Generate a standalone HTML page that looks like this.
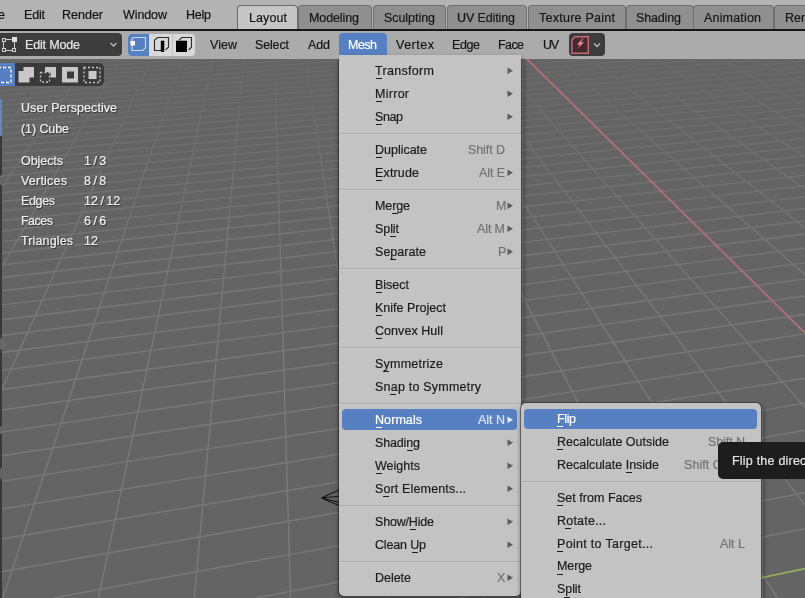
<!DOCTYPE html>
<html><head><meta charset="utf-8"><style>
html,body{margin:0;padding:0;}
body{width:805px;height:598px;overflow:hidden;position:relative;background:#646464;font-family:"Liberation Sans",sans-serif;font-size:12.5px;}
.t{position:absolute;white-space:nowrap;line-height:15px;will-change:transform;-webkit-text-stroke:0.2px currentColor;}
.r{position:absolute;}
</style></head><body>
<svg width="805" height="598" style="position:absolute;left:0;top:0">
<rect x="0" y="58" width="805" height="540" fill="#646464"/>
<defs><linearGradient id="gf" x1="0" y1="58" x2="0" y2="598" gradientUnits="userSpaceOnUse"><stop offset="0" stop-color="#fff" stop-opacity="0.25"/><stop offset="0.133" stop-color="#fff" stop-opacity="0.5"/><stop offset="0.356" stop-color="#fff" stop-opacity="0.85"/><stop offset="0.54" stop-color="#fff" stop-opacity="1"/></linearGradient><mask id="gm" maskUnits="userSpaceOnUse" x="0" y="0" width="805" height="598"><rect x="0" y="58" width="805" height="540" fill="url(#gf)"/></mask></defs>
<g id="grid" stroke="#7a7a7a" stroke-width="1.4" fill="none" mask="url(#gm)"><line x1="0.0" y1="61.2" x2="46.8" y2="58.0"/><line x1="0.0" y1="65.0" x2="101.2" y2="58.0"/><line x1="0.0" y1="69.0" x2="156.0" y2="58.0"/><line x1="0.0" y1="73.1" x2="211.2" y2="58.0"/><line x1="0.0" y1="77.3" x2="266.7" y2="58.0"/><line x1="0.0" y1="81.6" x2="322.6" y2="58.0"/><line x1="0.0" y1="86.1" x2="378.9" y2="58.0"/><line x1="0.0" y1="90.7" x2="435.6" y2="58.0"/><line x1="0.0" y1="95.4" x2="492.6" y2="58.0"/><line x1="0.0" y1="100.4" x2="550.1" y2="58.0"/><line x1="0.0" y1="105.5" x2="607.9" y2="58.0"/><line x1="0.0" y1="110.8" x2="666.2" y2="58.0"/><line x1="0.0" y1="116.3" x2="724.9" y2="58.0"/><line x1="0.0" y1="122.0" x2="783.9" y2="58.0"/><line x1="0.0" y1="127.9" x2="805.0" y2="61.2"/><line x1="0.0" y1="134.0" x2="805.0" y2="66.3"/><line x1="0.0" y1="140.3" x2="805.0" y2="71.6"/><line x1="0.0" y1="146.9" x2="805.0" y2="77.1"/><line x1="0.0" y1="153.8" x2="805.0" y2="82.8"/><line x1="0.0" y1="161.0" x2="805.0" y2="88.7"/><line x1="0.0" y1="168.5" x2="805.0" y2="94.9"/><line x1="0.0" y1="176.3" x2="805.0" y2="101.4"/><line x1="0.0" y1="184.4" x2="805.0" y2="108.2"/><line x1="0.0" y1="192.9" x2="805.0" y2="115.2"/><line x1="0.0" y1="201.8" x2="805.0" y2="122.6"/><line x1="0.0" y1="211.1" x2="805.0" y2="130.4"/><line x1="0.0" y1="220.8" x2="805.0" y2="138.5"/><line x1="0.0" y1="231.1" x2="805.0" y2="147.0"/><line x1="0.0" y1="241.9" x2="805.0" y2="155.9"/><line x1="0.0" y1="253.2" x2="805.0" y2="165.3"/><line x1="0.0" y1="265.1" x2="805.0" y2="175.3"/><line x1="0.0" y1="277.7" x2="805.0" y2="185.7"/><line x1="0.0" y1="291.0" x2="805.0" y2="196.8"/><line x1="0.0" y1="305.1" x2="805.0" y2="208.5"/><line x1="0.0" y1="320.0" x2="805.0" y2="220.9"/><line x1="0.0" y1="335.8" x2="805.0" y2="234.0"/><line x1="0.0" y1="352.7" x2="805.0" y2="248.0"/><line x1="0.0" y1="370.6" x2="805.0" y2="262.9"/><line x1="0.0" y1="389.8" x2="805.0" y2="278.9"/><line x1="0.0" y1="410.3" x2="805.0" y2="295.9"/><line x1="0.0" y1="432.4" x2="805.0" y2="314.2"/><line x1="0.0" y1="456.0" x2="805.0" y2="333.9"/><line x1="0.0" y1="481.6" x2="805.0" y2="355.2"/><line x1="0.0" y1="509.3" x2="805.0" y2="378.2"/><line x1="0.0" y1="539.3" x2="805.0" y2="403.1"/><line x1="0.0" y1="572.0" x2="805.0" y2="430.3"/><line x1="805.0" y1="460.0" x2="53.2" y2="598.0"/><line x1="805.0" y1="492.7" x2="255.8" y2="598.0"/><line x1="805.0" y1="528.7" x2="459.9" y2="598.0"/><line x1="0.0" y1="58.8" x2="0.8" y2="58.0"/><line x1="0.0" y1="91.2" x2="30.8" y2="58.0"/><line x1="0.0" y1="133.3" x2="60.9" y2="58.0"/><line x1="0.0" y1="189.9" x2="91.1" y2="58.0"/><line x1="0.0" y1="270.4" x2="121.4" y2="58.0"/><line x1="0.0" y1="393.7" x2="151.8" y2="58.0"/><line x1="182.3" y1="58.0" x2="2.8" y2="598.0"/><line x1="213.0" y1="58.0" x2="98.4" y2="598.0"/><line x1="243.7" y1="58.0" x2="194.3" y2="598.0"/><line x1="274.6" y1="58.0" x2="290.6" y2="598.0"/><line x1="305.6" y1="58.0" x2="387.2" y2="598.0"/><line x1="336.7" y1="58.0" x2="484.2" y2="598.0"/><line x1="368.0" y1="58.0" x2="581.6" y2="598.0"/><line x1="399.3" y1="58.0" x2="679.3" y2="598.0"/><line x1="430.8" y1="58.0" x2="777.4" y2="598.0"/><line x1="805.0" y1="505.4" x2="462.4" y2="58.0"/><line x1="805.0" y1="407.3" x2="494.1" y2="58.0"/><line x1="805.0" y1="274.7" x2="557.9" y2="58.0"/><line x1="805.0" y1="227.9" x2="589.9" y2="58.0"/><line x1="805.0" y1="189.3" x2="622.1" y2="58.0"/><line x1="805.0" y1="157.1" x2="654.4" y2="58.0"/><line x1="805.0" y1="129.7" x2="686.9" y2="58.0"/><line x1="805.0" y1="106.2" x2="719.5" y2="58.0"/><line x1="805.0" y1="85.8" x2="752.2" y2="58.0"/><line x1="805.0" y1="67.9" x2="785.0" y2="58.0"/></g>
<line x1="525.9" y1="58" x2="805" y2="333" stroke="#b36c79" stroke-width="1.8"/>
<line x1="665.7" y1="598" x2="805" y2="568.6" stroke="#94b05a" stroke-width="1.8"/>
<path d="M339,490 L321.3,498 L339,496.3 M321.3,498 L339,502.2 M321.3,498 L339,505.5" stroke="#151515" stroke-width="1.1" fill="none"/>
</svg>
<div class="r" style="left:0px;top:0px;width:805px;height:29px;background:#b3b3b3"></div>
<div class="t" style="left:-14.5px;top:8.37px;color:#111;font-size:12.5px;letter-spacing:-0.385px;">File</div>
<div class="t" style="left:24px;top:8.37px;color:#111;font-size:12.5px;letter-spacing:-0.182px;">Edit</div>
<div class="t" style="left:62.3px;top:8.37px;color:#111;font-size:12.5px;letter-spacing:0.000px;">Render</div>
<div class="t" style="left:122.5px;top:8.37px;color:#111;font-size:12.5px;letter-spacing:-0.094px;">Window</div>
<div class="t" style="left:186.3px;top:8.37px;color:#111;font-size:12.5px;letter-spacing:-0.240px;">Help</div>
<div class="r" style="left:237px;top:5px;width:60.5px;height:24px;background:#c6c6c6;border:1px solid #6a6a6a;border-bottom:none;border-radius:4px 4px 0 0;box-sizing:border-box"></div>
<div class="t" style="left:248.5px;top:11.17px;color:#151515;font-size:12.5px;letter-spacing:0.094px;">Layout</div>
<div class="r" style="left:297.5px;top:5px;width:74.0px;height:24px;background:#8f8f8f;border:1px solid #6f6f6f;border-bottom:none;border-radius:4px 4px 0 0;box-sizing:border-box"></div>
<div class="t" style="left:309.2px;top:11.17px;color:#151515;font-size:12.5px;letter-spacing:-0.105px;">Modeling</div>
<div class="r" style="left:372.5px;top:5px;width:73.5px;height:24px;background:#8f8f8f;border:1px solid #6f6f6f;border-bottom:none;border-radius:4px 4px 0 0;box-sizing:border-box"></div>
<div class="t" style="left:383.7px;top:11.17px;color:#151515;font-size:12.5px;letter-spacing:-0.055px;">Sculpting</div>
<div class="r" style="left:446.5px;top:5px;width:80.5px;height:24px;background:#8f8f8f;border:1px solid #6f6f6f;border-bottom:none;border-radius:4px 4px 0 0;box-sizing:border-box"></div>
<div class="t" style="left:457px;top:11.17px;color:#151515;font-size:12.5px;letter-spacing:-0.120px;">UV Editing</div>
<div class="r" style="left:528px;top:5px;width:97.5px;height:24px;background:#8f8f8f;border:1px solid #6f6f6f;border-bottom:none;border-radius:4px 4px 0 0;box-sizing:border-box"></div>
<div class="t" style="left:538.6px;top:11.17px;color:#151515;font-size:12.5px;letter-spacing:0.254px;">Texture Paint</div>
<div class="r" style="left:625.5px;top:5px;width:68.0px;height:24px;background:#8f8f8f;border:1px solid #6f6f6f;border-bottom:none;border-radius:4px 4px 0 0;box-sizing:border-box"></div>
<div class="t" style="left:636.4px;top:11.17px;color:#151515;font-size:12.5px;letter-spacing:-0.148px;">Shading</div>
<div class="r" style="left:693px;top:5px;width:81px;height:24px;background:#8f8f8f;border:1px solid #6f6f6f;border-bottom:none;border-radius:4px 4px 0 0;box-sizing:border-box"></div>
<div class="t" style="left:704.4px;top:11.17px;color:#151515;font-size:12.5px;letter-spacing:0.176px;">Animation</div>
<div class="r" style="left:774px;top:5px;width:86px;height:24px;background:#8f8f8f;border:1px solid #6f6f6f;border-bottom:none;border-radius:4px 4px 0 0;box-sizing:border-box"></div>
<div class="t" style="left:785.4px;top:11.17px;color:#151515;font-size:12.5px;letter-spacing:0.039px;">Rendering</div>
<div class="r" style="left:0px;top:29px;width:805px;height:2px;background:#171717"></div>
<div class="r" style="left:0px;top:31px;width:805px;height:28px;background:#ababab"></div>
<div class="r" style="left:-6px;top:33px;width:128px;height:23px;background:#3d3d3d;border-radius:4px"></div>
<div class="t" style="left:25.2px;top:37.87px;color:#e8e8e8;font-size:12.5px;letter-spacing:-0.160px;">Edit Mode</div>
<svg style="position:absolute;left:0;top:30px" width="24" height="30"><g fill="none" stroke="#d0d0d0" stroke-width="1"><line x1="3.5" y1="12" x2="3.5" y2="18.5"/><line x1="6" y1="20.5" x2="12" y2="20.5"/><line x1="14.5" y1="12" x2="14.5" y2="18.5"/><line x1="6" y1="9.5" x2="11.5" y2="9.5"/><rect x="2.5" y="8.5" width="3" height="3"/><rect x="2.5" y="18.5" width="3" height="3"/><rect x="12.5" y="18.5" width="3" height="3"/></g><rect x="12" y="7" width="5" height="5" fill="#e0e0e0"/></svg>
<svg style="position:absolute;left:108px;top:40px" width="12" height="10"><polyline points="2.5,3 5.5,6 8.5,3" fill="none" stroke="#bdbdbd" stroke-width="1.3"/></svg>
<div class="r" style="left:128px;top:34px;width:67px;height:22px;background:#d9d9d9;border-radius:4px"></div>
<div class="r" style="left:128px;top:34px;width:21px;height:22px;background:#5680c2;border-radius:4px 0 0 4px"></div>
<div class="r" style="left:172px;top:34px;width:1px;height:22px;background:#c2c2c2"></div>
<svg style="position:absolute;left:126px;top:32px" width="70" height="25"><path d="M6,14.8 L6,7.4 Q6,5.5 8,5.5 L19.5,5.5 L19.5,15.8 L16.5,18.5 L6,18.5 L6,14" fill="none" stroke="#c9dcf7" stroke-width="1.1"/><rect x="4.5" y="9" width="4.5" height="4.5" fill="#fff"/><path d="M35,18.5 L28.5,18.5 L28.5,8.3 L31.5,5.5 L42.5,5.5 L42.5,15.2 L39.6,17.8" fill="none" stroke="#2a2a2a" stroke-width="1.1"/><rect x="34.8" y="8.7" width="3.5" height="11.1" fill="#000"/><path d="M53,8.3 L55.7,5.5 L65.5,5.5 L65.5,15.2 L62.6,18" fill="none" stroke="#2a2a2a" stroke-width="1.1"/><rect x="50" y="8.7" width="11" height="11.3" fill="#000"/></svg>
<div class="t" style="left:210.4px;top:37.77px;color:#151515;font-size:12.5px;letter-spacing:0.036px;">View</div>
<div class="t" style="left:255.3px;top:37.77px;color:#151515;font-size:12.5px;letter-spacing:-0.150px;">Select</div>
<div class="t" style="left:308px;top:37.77px;color:#151515;font-size:12.5px;letter-spacing:-0.125px;">Add</div>
<div class="t" style="left:396.4px;top:37.77px;color:#151515;font-size:12.5px;letter-spacing:0.512px;">Vertex</div>
<div class="t" style="left:452.4px;top:37.77px;color:#151515;font-size:12.5px;letter-spacing:-0.401px;">Edge</div>
<div class="t" style="left:498.4px;top:37.77px;color:#151515;font-size:12.5px;letter-spacing:-0.599px;">Face</div>
<div class="t" style="left:543.4px;top:37.77px;color:#151515;font-size:12.5px;letter-spacing:-1.375px;">UV</div>
<div class="r" style="left:339px;top:32.5px;width:48px;height:23px;background:#5680c2;border-radius:4px 4px 0 0"></div>
<div class="t" style="left:348.3px;top:37.77px;color:#ffffff;font-size:12.5px;letter-spacing:-0.521px;">Mesh</div>
<div class="r" style="left:569.3px;top:33px;width:35.5px;height:23px;background:#3d3d3d;border-radius:4px"></div>
<svg style="position:absolute;left:569px;top:33px" width="37" height="24"><path d="M6,3.8 L3,7 L3,20.3 L19.3,20.3 L19.3,3.8 Z" fill="#46292e" stroke="#c56a78" stroke-width="1.4"/><path d="M13.5,5.5 L7.8,11.8 L11,11.8 L8.3,16 L15,9.3 L11.8,9.3 L14.5,5.5 Z" fill="#ea8796"/><polyline points="25,10.5 28,13.5 31,10.5" fill="none" stroke="#bdbdbd" stroke-width="1.3"/></svg>
<div class="r" style="left:0px;top:63px;width:104px;height:22.5px;background:#3a3a3a;border-radius:0 5px 5px 0"></div>
<div class="r" style="left:0px;top:63px;width:15px;height:22.5px;background:#5680c2"></div>
<svg style="position:absolute;left:0;top:63px" width="104" height="23"><rect x="-2" y="4.5" width="13" height="15" fill="none" stroke="#fff" stroke-width="1.3" stroke-dasharray="3,2"/><path d="M18.5,8 L23.5,8 L23.5,4 L34,4 L34,14.5 L29.5,14.5 L29.5,19.5 L18.5,19.5 Z" fill="#c8c8c8"/><rect x="40.5" y="9.5" width="9" height="9.5" fill="none" stroke="#c8c8c8" stroke-width="1.3" stroke-dasharray="2,2"/><path d="M45,4 L56,4 L56,14.5 L50.5,14.5 L50.5,9 L45,9 Z" fill="#c8c8c8"/><path d="M62,4 L78,4 L78,19.5 L62,19.5 Z M67,8.5 L67,15.5 L74,15.5 L74,8.5 Z" fill="#c8c8c8" fill-rule="evenodd"/><rect x="84" y="4.5" width="16" height="15" fill="none" stroke="#c8c8c8" stroke-width="1.3" stroke-dasharray="2,2"/><rect x="88.5" y="8" width="8" height="8" fill="#c8c8c8"/></svg>
<div class="r" style="left:-4px;top:98px;width:6px;height:78px;background:#38383a;border-radius:3px"></div>
<div class="r" style="left:-4px;top:98px;width:6px;height:38px;background:#6386c0;border-radius:3px 3px 0 0"></div>
<div class="r" style="left:-4px;top:184px;width:6px;height:155px;background:#38383a;border-radius:3px"></div>
<div class="r" style="left:-4px;top:349px;width:6px;height:78px;background:#38383a;border-radius:3px"></div>
<div class="r" style="left:-4px;top:433px;width:6px;height:36px;background:#38383a;border-radius:3px"></div>
<div class="r" style="left:-4px;top:478px;width:6px;height:130px;background:#38383a;border-radius:3px"></div>
<svg style="position:absolute;left:0;top:336px" width="8" height="16"><polyline points="1.5,5 4.5,8.5 1.5,12" fill="none" stroke="#7c7c7c" stroke-width="1"/></svg>
<div class="t" style="left:21px;top:101.17px;color:#f0f0f0;font-size:12.5px;letter-spacing:0.055px;text-shadow:1px 1px 1px rgba(0,0,0,0.55)">User Perspective</div>
<div class="t" style="left:21px;top:122.47px;color:#f0f0f0;font-size:12.5px;letter-spacing:-0.089px;text-shadow:1px 1px 1px rgba(0,0,0,0.55)">(1) Cube</div>
<div class="t" style="left:21px;top:154.17px;color:#f0f0f0;font-size:12.5px;letter-spacing:-0.062px;text-shadow:1px 1px 1px rgba(0,0,0,0.55)">Objects</div>
<div class="t" style="left:83.6px;top:154.17px;color:#f0f0f0;font-size:12.5px;text-shadow:1px 1px 1px rgba(0,0,0,0.55);word-spacing:-1px">1 / 3</div>
<div class="t" style="left:21px;top:174.17px;color:#f0f0f0;font-size:12.5px;letter-spacing:0.219px;text-shadow:1px 1px 1px rgba(0,0,0,0.55)">Vertices</div>
<div class="t" style="left:83.6px;top:174.17px;color:#f0f0f0;font-size:12.5px;text-shadow:1px 1px 1px rgba(0,0,0,0.55);word-spacing:-1px">8 / 8</div>
<div class="t" style="left:21px;top:194.17px;color:#f0f0f0;font-size:12.5px;letter-spacing:-0.363px;text-shadow:1px 1px 1px rgba(0,0,0,0.55)">Edges</div>
<div class="t" style="left:83.6px;top:194.17px;color:#f0f0f0;font-size:12.5px;text-shadow:1px 1px 1px rgba(0,0,0,0.55);word-spacing:-1px">12 / 12</div>
<div class="t" style="left:21px;top:214.17px;color:#f0f0f0;font-size:12.5px;letter-spacing:-0.512px;text-shadow:1px 1px 1px rgba(0,0,0,0.55)">Faces</div>
<div class="t" style="left:83.6px;top:214.17px;color:#f0f0f0;font-size:12.5px;text-shadow:1px 1px 1px rgba(0,0,0,0.55);word-spacing:-1px">6 / 6</div>
<div class="t" style="left:21px;top:234.17px;color:#f0f0f0;font-size:12.5px;letter-spacing:0.131px;text-shadow:1px 1px 1px rgba(0,0,0,0.55)">Triangles</div>
<div class="t" style="left:83.6px;top:234.17px;color:#f0f0f0;font-size:12.5px;text-shadow:1px 1px 1px rgba(0,0,0,0.55);word-spacing:-1px">12</div>
<div class="r" style="left:339px;top:57px;width:184px;height:540px;box-shadow:0 1px 4px 1px rgba(0,0,0,0.35);border-radius:6px"></div>
<div class="r" style="left:338px;top:59px;width:184px;height:537.5px;background:rgba(40,40,40,0.6);border-radius:0 0 6px 6px"></div>
<div class="r" style="left:339px;top:55px;width:182px;height:540.5px;background:#c3c3c3;border-radius:0 0 5px 5px"></div>
<div class="t" style="left:375px;top:63.77px;color:#1b1b1b;font-size:12.5px;letter-spacing:0.316px;">Transform</div>
<div class="r" style="left:376px;top:78px;width:6px;height:1px;background:#1b1b1b"></div>
<svg style="position:absolute;left:507px;top:67.0px" width="7" height="9"><path d="M0.5,0.5 L6,3.8 L0.5,7.1 Z" fill="#5c5c5c"/></svg>
<div class="t" style="left:375px;top:86.77px;color:#1b1b1b;font-size:12.5px;letter-spacing:0.278px;">Mirror</div>
<div class="r" style="left:376px;top:101px;width:6px;height:1px;background:#1b1b1b"></div>
<svg style="position:absolute;left:507px;top:90.0px" width="7" height="9"><path d="M0.5,0.5 L6,3.8 L0.5,7.1 Z" fill="#5c5c5c"/></svg>
<div class="t" style="left:375px;top:109.77px;color:#1b1b1b;font-size:12.5px;letter-spacing:-0.401px;">Snap</div>
<div class="r" style="left:376px;top:124px;width:6px;height:1px;background:#1b1b1b"></div>
<svg style="position:absolute;left:507px;top:113.0px" width="7" height="9"><path d="M0.5,0.5 L6,3.8 L0.5,7.1 Z" fill="#5c5c5c"/></svg>
<div class="r" style="left:339px;top:133px;width:182px;height:1px;background:#aaaaaa"></div>
<div class="r" style="left:339px;top:134px;width:182px;height:1px;background:#cacaca"></div>
<div class="t" style="left:375px;top:142.77px;color:#1b1b1b;font-size:12.5px;letter-spacing:-0.016px;">Duplicate</div>
<div class="r" style="left:376px;top:157px;width:6px;height:1px;background:#1b1b1b"></div>
<div class="t" style="left:468px;top:142.77px;color:#727272;font-size:12.5px;letter-spacing:-0.086px;">Shift D</div>
<div class="t" style="left:375px;top:165.77px;color:#1b1b1b;font-size:12.5px;letter-spacing:0.154px;">Extrude</div>
<div class="r" style="left:376px;top:180px;width:6px;height:1px;background:#1b1b1b"></div>
<div class="t" style="left:479px;top:165.77px;color:#727272;font-size:12.5px;letter-spacing:-0.102px;">Alt E</div>
<svg style="position:absolute;left:507px;top:169.0px" width="7" height="9"><path d="M0.5,0.5 L6,3.8 L0.5,7.1 Z" fill="#5c5c5c"/></svg>
<div class="r" style="left:339px;top:189px;width:182px;height:1px;background:#aaaaaa"></div>
<div class="r" style="left:339px;top:190px;width:182px;height:1px;background:#cacaca"></div>
<div class="t" style="left:375px;top:198.77px;color:#1b1b1b;font-size:12.5px;letter-spacing:-0.105px;">Merge</div>
<div class="r" style="left:392px;top:213px;width:6px;height:1px;background:#1b1b1b"></div>
<div class="t" style="left:496px;top:198.77px;color:#727272;font-size:12.5px;">M</div>
<svg style="position:absolute;left:507px;top:202.0px" width="7" height="9"><path d="M0.5,0.5 L6,3.8 L0.5,7.1 Z" fill="#5c5c5c"/></svg>
<div class="t" style="left:375px;top:221.77px;color:#1b1b1b;font-size:12.5px;letter-spacing:-0.082px;">Split</div>
<div class="r" style="left:390px;top:236px;width:6px;height:1px;background:#1b1b1b"></div>
<div class="t" style="left:477px;top:221.77px;color:#727272;font-size:12.5px;letter-spacing:-0.117px;">Alt M</div>
<svg style="position:absolute;left:507px;top:225.0px" width="7" height="9"><path d="M0.5,0.5 L6,3.8 L0.5,7.1 Z" fill="#5c5c5c"/></svg>
<div class="t" style="left:375px;top:244.77px;color:#1b1b1b;font-size:12.5px;letter-spacing:0.038px;">Separate</div>
<div class="r" style="left:390px;top:259px;width:6px;height:1px;background:#1b1b1b"></div>
<div class="t" style="left:498px;top:244.77px;color:#727272;font-size:12.5px;">P</div>
<svg style="position:absolute;left:507px;top:248.0px" width="7" height="9"><path d="M0.5,0.5 L6,3.8 L0.5,7.1 Z" fill="#5c5c5c"/></svg>
<div class="r" style="left:339px;top:268px;width:182px;height:1px;background:#aaaaaa"></div>
<div class="r" style="left:339px;top:269px;width:182px;height:1px;background:#cacaca"></div>
<div class="t" style="left:375px;top:277.77px;color:#1b1b1b;font-size:12.5px;letter-spacing:-0.009px;">Bisect</div>
<div class="r" style="left:376px;top:292px;width:6px;height:1px;background:#1b1b1b"></div>
<div class="t" style="left:375px;top:300.77px;color:#1b1b1b;font-size:12.5px;letter-spacing:0.010px;">Knife Project</div>
<div class="r" style="left:376px;top:315px;width:6px;height:1px;background:#1b1b1b"></div>
<div class="t" style="left:375px;top:323.77px;color:#1b1b1b;font-size:12.5px;letter-spacing:0.059px;">Convex Hull</div>
<div class="r" style="left:376px;top:338px;width:6px;height:1px;background:#1b1b1b"></div>
<div class="r" style="left:339px;top:347px;width:182px;height:1px;background:#aaaaaa"></div>
<div class="r" style="left:339px;top:348px;width:182px;height:1px;background:#cacaca"></div>
<div class="t" style="left:375px;top:356.77px;color:#1b1b1b;font-size:12.5px;letter-spacing:0.226px;">Symmetrize</div>
<div class="r" style="left:383px;top:371px;width:6px;height:1px;background:#1b1b1b"></div>
<div class="t" style="left:375px;top:379.77px;color:#1b1b1b;font-size:12.5px;letter-spacing:0.214px;">Snap to Symmetry</div>
<div class="r" style="left:390px;top:394px;width:6px;height:1px;background:#1b1b1b"></div>
<div class="r" style="left:339px;top:403px;width:182px;height:1px;background:#aaaaaa"></div>
<div class="r" style="left:339px;top:404px;width:182px;height:1px;background:#cacaca"></div>
<div class="r" style="left:342px;top:409px;width:175px;height:20.5px;background:#5680c2;border-radius:4px"></div>
<div class="t" style="left:375px;top:412.77px;color:#ffffff;font-size:12.5px;letter-spacing:0.078px;">Normals</div>
<div class="r" style="left:376px;top:427px;width:6px;height:1px;background:#ffffff"></div>
<div class="t" style="left:478px;top:412.77px;color:#dde6f5;font-size:12.5px;letter-spacing:-0.023px;">Alt N</div>
<svg style="position:absolute;left:507px;top:416.0px" width="7" height="9"><path d="M0.5,0.5 L6,3.8 L0.5,7.1 Z" fill="#e8eef8"/></svg>
<div class="t" style="left:375px;top:435.77px;color:#1b1b1b;font-size:12.5px;letter-spacing:-0.148px;">Shading</div>
<div class="r" style="left:407px;top:450px;width:6px;height:1px;background:#1b1b1b"></div>
<svg style="position:absolute;left:507px;top:439.0px" width="7" height="9"><path d="M0.5,0.5 L6,3.8 L0.5,7.1 Z" fill="#5c5c5c"/></svg>
<div class="t" style="left:375px;top:458.77px;color:#1b1b1b;font-size:12.5px;letter-spacing:0.010px;">Weights</div>
<div class="r" style="left:376px;top:473px;width:6px;height:1px;background:#1b1b1b"></div>
<svg style="position:absolute;left:507px;top:462.0px" width="7" height="9"><path d="M0.5,0.5 L6,3.8 L0.5,7.1 Z" fill="#5c5c5c"/></svg>
<div class="t" style="left:375px;top:481.77px;color:#1b1b1b;font-size:12.5px;letter-spacing:0.140px;">Sort Elements...</div>
<div class="r" style="left:383px;top:496px;width:6px;height:1px;background:#1b1b1b"></div>
<svg style="position:absolute;left:507px;top:485.0px" width="7" height="9"><path d="M0.5,0.5 L6,3.8 L0.5,7.1 Z" fill="#5c5c5c"/></svg>
<div class="r" style="left:339px;top:505px;width:182px;height:1px;background:#aaaaaa"></div>
<div class="r" style="left:339px;top:506px;width:182px;height:1px;background:#cacaca"></div>
<div class="t" style="left:375px;top:514.77px;color:#1b1b1b;font-size:12.5px;letter-spacing:-0.184px;">Show/Hide</div>
<div class="r" style="left:410px;top:529px;width:6px;height:1px;background:#1b1b1b"></div>
<svg style="position:absolute;left:507px;top:518.0px" width="7" height="9"><path d="M0.5,0.5 L6,3.8 L0.5,7.1 Z" fill="#5c5c5c"/></svg>
<div class="t" style="left:375px;top:537.77px;color:#1b1b1b;font-size:12.5px;letter-spacing:-0.161px;">Clean Up</div>
<div class="r" style="left:412px;top:552px;width:6px;height:1px;background:#1b1b1b"></div>
<svg style="position:absolute;left:507px;top:541.0px" width="7" height="9"><path d="M0.5,0.5 L6,3.8 L0.5,7.1 Z" fill="#5c5c5c"/></svg>
<div class="r" style="left:339px;top:561px;width:182px;height:1px;background:#aaaaaa"></div>
<div class="r" style="left:339px;top:562px;width:182px;height:1px;background:#cacaca"></div>
<div class="t" style="left:375px;top:570.77px;color:#1b1b1b;font-size:12.5px;letter-spacing:-0.028px;">Delete</div>
<div class="t" style="left:497px;top:570.77px;color:#727272;font-size:12.5px;">X</div>
<svg style="position:absolute;left:507px;top:574.0px" width="7" height="9"><path d="M0.5,0.5 L6,3.8 L0.5,7.1 Z" fill="#5c5c5c"/></svg>
<div class="r" style="left:521px;top:405px;width:242px;height:200px;box-shadow:0 1px 4px 1px rgba(0,0,0,0.35);border-radius:6px"></div>
<div class="r" style="left:521px;top:403px;width:240px;height:200px;background:#c3c3c3;border-radius:5px 5px 0 0;box-shadow:0 0 0 1px rgba(40,40,40,0.55)"></div>
<div class="r" style="left:524px;top:408.5px;width:233px;height:20.5px;background:#5680c2;border-radius:4px"></div>
<div class="t" style="left:556.5px;top:411.97px;color:#ffffff;font-size:12.5px;letter-spacing:-0.385px;">Flip</div>
<div class="r" style="left:557px;top:426px;width:6px;height:1px;background:#ffffff"></div>
<div class="t" style="left:556.5px;top:434.87px;color:#1b1b1b;font-size:12.5px;letter-spacing:0.007px;">Recalculate Outside</div>
<div class="r" style="left:557px;top:449px;width:6px;height:1px;background:#1b1b1b"></div>
<div class="t" style="left:708px;top:434.87px;color:#727272;font-size:12.5px;letter-spacing:-0.086px;">Shift N</div>
<div class="t" style="left:556.5px;top:457.77px;color:#1b1b1b;font-size:12.5px;letter-spacing:-0.009px;">Recalculate Inside</div>
<div class="r" style="left:626px;top:472px;width:6px;height:1px;background:#1b1b1b"></div>
<div class="t" style="left:684px;top:457.77px;color:#727272;font-size:12.5px;letter-spacing:0.053px;">Shift Ctrl N</div>
<div class="r" style="left:521px;top:481px;width:240px;height:1px;background:#aaaaaa"></div>
<div class="r" style="left:521px;top:482px;width:240px;height:1px;background:#cacaca"></div>
<div class="t" style="left:556.5px;top:490.77px;color:#1b1b1b;font-size:12.5px;letter-spacing:0.020px;">Set from Faces</div>
<div class="r" style="left:557px;top:505px;width:6px;height:1px;background:#1b1b1b"></div>
<div class="t" style="left:556.5px;top:513.67px;color:#1b1b1b;font-size:12.5px;letter-spacing:0.221px;">Rotate...</div>
<div class="r" style="left:565px;top:528px;width:6px;height:1px;background:#1b1b1b"></div>
<div class="t" style="left:556.5px;top:536.57px;color:#1b1b1b;font-size:12.5px;letter-spacing:0.307px;">Point to Target...</div>
<div class="r" style="left:557px;top:551px;width:6px;height:1px;background:#1b1b1b"></div>
<div class="t" style="left:720px;top:536.57px;color:#727272;font-size:12.5px;letter-spacing:-0.004px;">Alt L</div>
<div class="t" style="left:556.5px;top:559.47px;color:#1b1b1b;font-size:12.5px;letter-spacing:-0.105px;">Merge</div>
<div class="r" style="left:557px;top:574px;width:6px;height:1px;background:#1b1b1b"></div>
<div class="t" style="left:556.5px;top:582.37px;color:#1b1b1b;font-size:12.5px;letter-spacing:-0.082px;">Split</div>
<div class="r" style="left:564px;top:597px;width:6px;height:1px;background:#1b1b1b"></div>
<div class="r" style="left:718px;top:442px;width:120px;height:36.5px;background:#1d1d1d;border-radius:5px"></div>
<div class="t" style="left:732.4px;top:454.17px;color:#e6e6e6;font-size:12.5px;letter-spacing:0.213px;white-space:nowrap">Flip the direction of selected faces' vertex and face normals</div>
</body></html>
